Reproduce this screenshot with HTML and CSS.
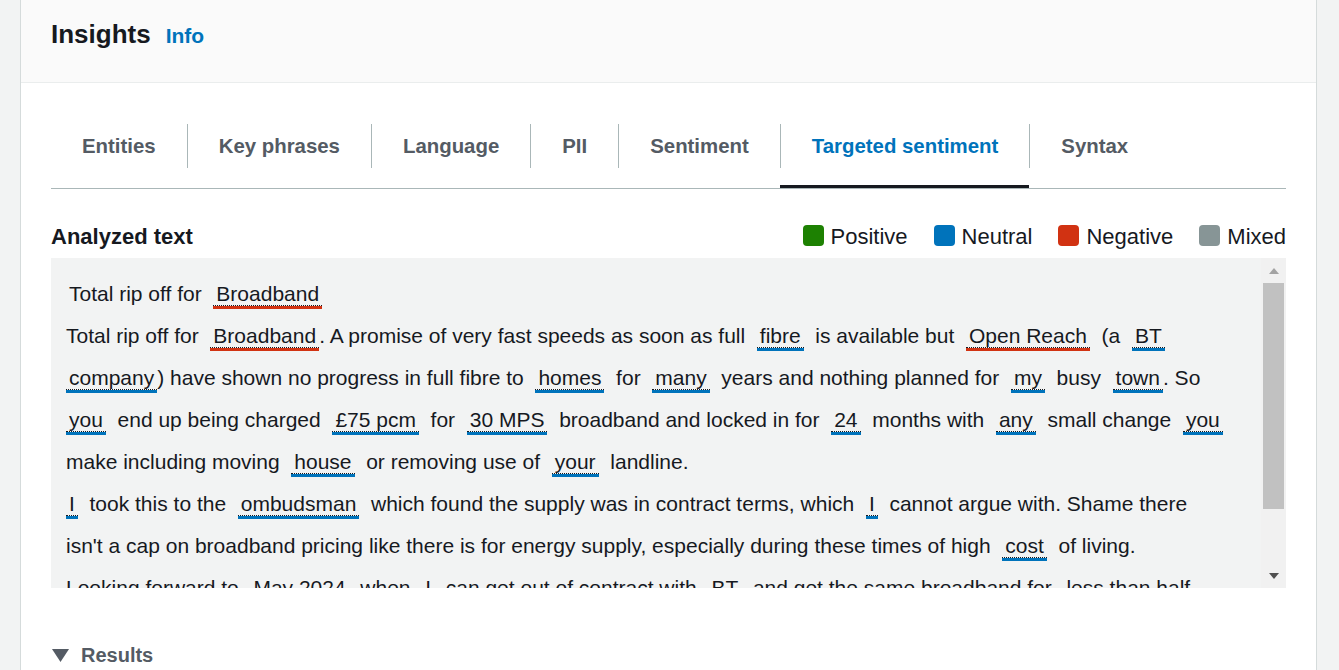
FILE: index.html
```html
<!DOCTYPE html>
<html lang="en">
<head>
<meta charset="utf-8">
<title>Insights</title>
<link rel="stylesheet" href="styles.css">
</head>
<body>
<div class="page">
  <section class="card">
    <header class="card-header">
      <h2 class="title">Insights</h2>
      <a class="info" href="#">Info</a>
    </header>
    <div class="card-body">
      <ul class="tabs">
        <li class="tab"><span class="tab-label">Entities</span></li>
        <li class="tab"><span class="tab-label">Key phrases</span></li>
        <li class="tab"><span class="tab-label">Language</span></li>
        <li class="tab"><span class="tab-label">PII</span></li>
        <li class="tab"><span class="tab-label">Sentiment</span></li>
        <li class="tab active"><span class="tab-label">Targeted sentiment</span></li>
        <li class="tab"><span class="tab-label">Syntax</span></li>
      </ul>

      <div class="analyzed-head">
        <h3 class="section-title">Analyzed text</h3>
        <div class="legend">
          <span class="legend-item"><span class="swatch sw-pos"></span>Positive</span>
          <span class="legend-item"><span class="swatch sw-neu"></span>Neutral</span>
          <span class="legend-item"><span class="swatch sw-neg"></span>Negative</span>
          <span class="legend-item"><span class="swatch sw-mix"></span>Mixed</span>
        </div>
      </div>

      <div class="text-box">
        <div class="text-scroll">
<p class="analyzed"><span class="lead">Total rip off for  </span><span class="ent neg">Broadband</span>
Total rip off for  <span class="ent neg">Broadband</span>. A promise of very fast speeds as soon as full  <span class="ent neu">fibre</span>  is available but  <span class="ent neg">Open Reach</span>  (a  <span class="ent neu">BT</span>  <span class="ent neu">company</span>) have shown no progress in full fibre to  <span class="ent neu">homes</span>  for  <span class="ent neu">many</span>  years and nothing planned for  <span class="ent neu">my</span>  busy  <span class="ent neu">town</span>. So  <span class="ent neu">you</span>  end up being charged  <span class="ent neu">£75 pcm</span>  for  <span class="ent neu">30 MPS</span>  broadband and locked in for  <span class="ent neu">24</span>  months with  <span class="ent neu">any</span>  small change  <span class="ent neu">you</span>  make including moving  <span class="ent neu">house</span>  or removing use of  <span class="ent neu">your</span>  landline.
<span class="ent neu">I</span>  took this to the  <span class="ent neu">ombudsman</span>  which found the supply was in contract terms, which  <span class="ent neu">I</span>  cannot argue with. Shame there isn't a cap on broadband pricing like there is for energy supply, especially during these times of high  <span class="ent neu">cost</span>  of living.
Looking forward to  <span class="ent neu">May 2024</span>  when  <span class="ent neu">I</span>  can get out of contract with  <span class="ent neu">BT</span>  and get the same broadband for  <span class="ent neu">less than half</span>  the price.</p>
        </div>
        <div class="scrollbar" aria-hidden="true">
          <span class="sb-btn sb-up"></span>
          <span class="sb-thumb"></span>
          <span class="sb-track"></span>
          <span class="sb-btn sb-down"></span>
        </div>
      </div>

      <div class="results">
        <svg class="caret" width="17" height="13" viewBox="0 0 17 13" aria-hidden="true"><polygon points="0,0 17,0 8.5,13" fill="#545b64"/></svg>
        <span>Results</span>
      </div>
    </div>
  </section>
</div>
</body>
</html>
```

FILE: styles.css
```css
* {
  box-sizing: border-box;
}

body {
  margin: 0;
  background: #f2f3f3;
  font-family: "Liberation Sans", Arial, sans-serif;
  color: #16191f;
}

.page {
  padding-left: 20px;
}

.card {
  width: 1297px;
  min-height: 670px;
  background: #ffffff;
  border-left: 1px solid #d5dbdb;
  border-right: 1px solid #d5dbdb;
}

.card-header {
  height: 83px;
  background: #fafafa;
  border-bottom: 1px solid #eaeded;
  padding: 17px 30px 0;
  display: flex;
  align-items: baseline;
}

.title {
  margin: 0;
  font-size: 26px;
  font-weight: 700;
  line-height: 34px;
}

.info {
  margin-left: 15px;
  font-size: 21px;
  font-weight: 700;
  color: #0073bb;
  text-decoration: none;
}

.card-body {
  padding: 0 30px;
}

.tabs {
  display: flex;
  margin: 0;
  padding: 41px 0 0;
  list-style: none;
  border-bottom: 1px solid #aab7b8;
}

.tab {
  padding-bottom: 20px;
}

.tab-label {
  display: block;
  padding: 0 31px;
  line-height: 44px;
  font-size: 20.4px;
  font-weight: 700;
  color: #545b64;
  white-space: nowrap;
}

.tab + .tab .tab-label {
  border-left: 1px solid #aab7b8;
}

.tab.active {
  padding-bottom: 17px;
  border-bottom: 3px solid #16191f;
}

.tab.active .tab-label {
  color: #0073bb;
}

.analyzed-head {
  display: flex;
  justify-content: space-between;
  align-items: center;
  height: 30px;
  margin-top: 33px;
  margin-bottom: 6px;
}

.section-title {
  margin: 0;
  font-size: 22px;
  font-weight: 700;
  line-height: 30px;
}

.legend {
  display: flex;
  gap: 26px;
  font-size: 22px;
  line-height: 30px;
}

.legend-item {
  display: flex;
  align-items: center;
  gap: 7px;
}

.swatch {
  width: 21px;
  height: 21px;
  border-radius: 4px;
  margin-bottom: 4px;
}

.sw-pos { background: #1d8102; }
.sw-neu { background: #0073bb; }
.sw-neg { background: #d13212; }
.sw-mix { background: #879596; }

.text-box {
  display: flex;
  height: 330px;
  background: #f2f3f3;
}

.text-scroll {
  flex: 1;
  overflow: hidden;
  padding: 15px 34px 0 15px;
}

.analyzed {
  margin: 0;
  font-size: 21px;
  line-height: 42px;
  white-space: pre-wrap;
}

.lead {
  padding-left: 3px;
}

.ent {
  white-space: nowrap;
  padding: 0 3px;
  border-bottom: 1px dotted #16191f;
}

.neg {
  box-shadow: 0 3px 0 #d13212;
}

.neu {
  box-shadow: 0 3px 0 #0073bb;
}

.scrollbar {
  width: 25px;
  background: #f1f1f1;
  display: flex;
  flex-direction: column;
  align-items: center;
}

.sb-btn {
  height: 25px;
  width: 100%;
  display: flex;
  align-items: center;
  justify-content: center;
}

.sb-up::before {
  content: "";
  border-left: 5.5px solid transparent;
  border-right: 5.5px solid transparent;
  border-bottom: 6px solid #a3a3a3;
}

.sb-down::before {
  content: "";
  border-left: 5.5px solid transparent;
  border-right: 5.5px solid transparent;
  border-top: 6px solid #505050;
}

.sb-thumb {
  width: 21px;
  height: 226px;
  background: #c1c1c1;
}

.sb-track {
  flex: 1;
}

.results {
  display: flex;
  align-items: center;
  gap: 12px;
  margin-top: 52px;
  padding-left: 1px;
  font-size: 20px;
  font-weight: 700;
  line-height: 30px;
  color: #545b64;
}

.caret {
  display: block;
}
```
